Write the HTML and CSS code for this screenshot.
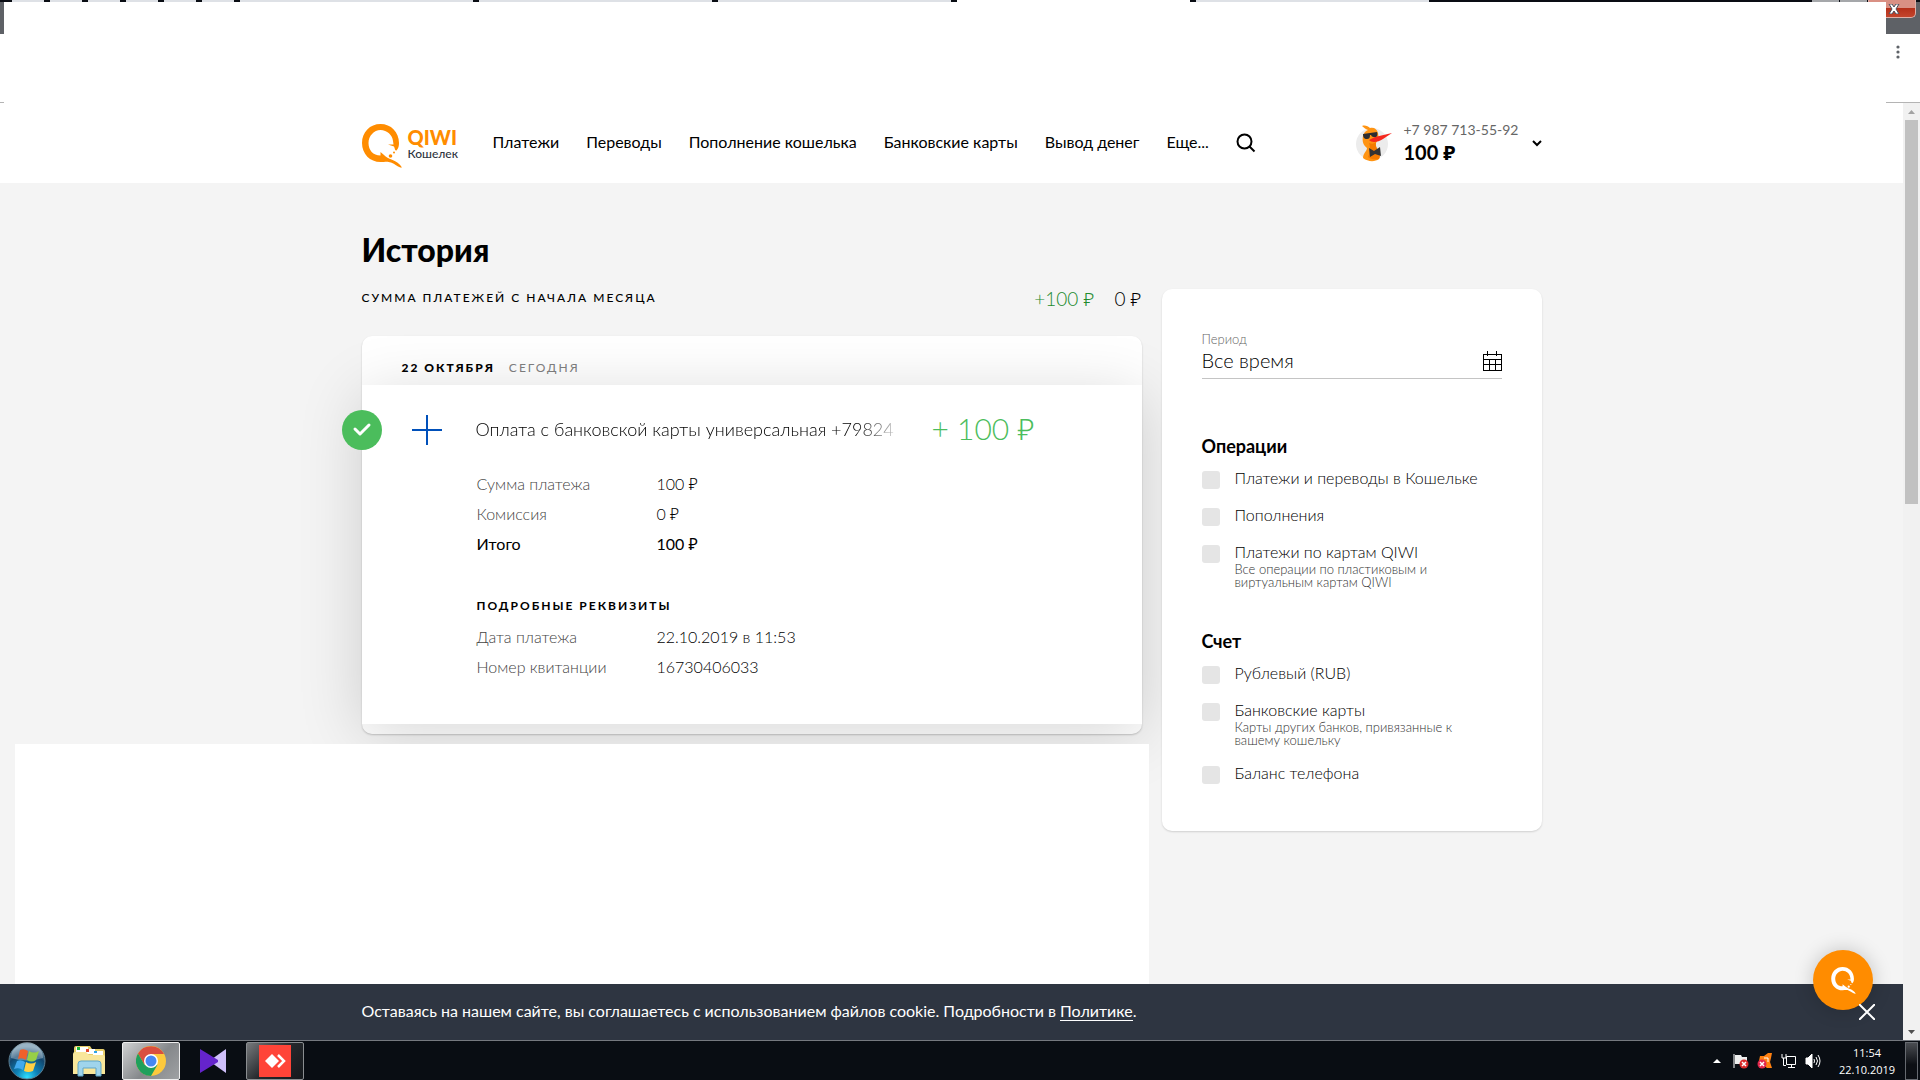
FILE: index.html
```html
<!DOCTYPE html>
<html lang="ru">
<head>
    <meta charset="UTF-8">
    <meta name="viewport" content="width=device-width, initial-scale=1.0">
    <title>История</title>
    <link rel="stylesheet" href="styles.css">
</head>
<body>

<svg class="defs" width="0" height="0" aria-hidden="true">
    <symbol id="bird" viewBox="0 0 40 44">
        <path fill="currentColor" fill-rule="evenodd" d="M18.500 0C8 0 0 8 0 19S8 38 18.500 38C23 38 25 37 29 38.500C34 40.500 37 44 40 43.500C38 40 34 37 29.500 35.500C27 34.500 24 33 22 31L18.500 28L18.500 31.500C11 31.500 6.500 26 6.500 19S12 6 18.500 6C25 6 30.500 11 31 17L31.500 20.500L26 20.500L32 22.500C33 25 33 27 34.500 26.500C36.500 24 37 22 37 19C37 8 29 0 18.500 0Z"/>
        <circle cx="28.500" cy="32" r="1.800" fill="currentColor"/>
        <circle cx="32" cy="28.500" r="1" fill="currentColor"/>
    </symbol>
</svg>

<div class="titlebar">
    <div class="tabs">
        <i class="tab tiny"></i><i class="tab tiny"></i><i class="tab tiny"></i><i class="tab tiny"></i><i class="tab tiny"></i><i class="tab tiny"></i>
        <i class="tab"></i><i class="tab"></i><i class="tab"></i><i class="tab active"></i><i class="tab"></i>
    </div>
    <i class="win-btn"></i>
    <i class="win-btn"></i>
    <button class="win-close" aria-label="Закрыть окно">
        <svg width="12" height="10" viewBox="0 0 12 10"><path d="M1 0h3l2 3 2-3h3L8 5l3 5H8L6 7l-2 3H1l3-5z" fill="#fff" stroke="#4a4f5c"/></svg>
    </button>
</div>
<div class="toolbar">
    <button class="menu-btn" aria-label="Меню">
        <svg width="4" height="14" viewBox="0 0 4 14"><circle cx="2" cy="2" r="1.600"/><circle cx="2" cy="7" r="1.600"/><circle cx="2" cy="12" r="1.600"/></svg>
    </button>
</div>
<div class="cover-top"></div>

<div class="viewport">
    <div class="page">
        <header class="header">
            <div class="container header-inner">
                <a href="#" class="logo" aria-label="QIWI Кошелек">
                    <svg class="logo-bird" width="40" height="44"><use href="#bird"/></svg>
                    <span class="logo-text"><b>QIWI</b><span>Кошелек</span></span>
                </a>
                <nav class="nav">
                    <a href="#">Платежи</a>
                    <a href="#">Переводы</a>
                    <a href="#">Пополнение кошелька</a>
                    <a href="#">Банковские карты</a>
                    <a href="#">Вывод денег</a>
                    <a href="#">Еще...</a>
                    <button class="search" aria-label="Поиск">
                        <svg width="20" height="20" viewBox="0 0 20 20" fill="none" stroke="#000" stroke-width="2"><circle cx="8.500" cy="8.500" r="7"/><path d="M13.500 13.500l5 5"/></svg>
                    </button>
                </nav>
                <button class="user">
                    <svg width="38" height="38" viewBox="0 0 38 38">
                        <circle cx="17" cy="20" r="16" fill="#ececec"/>
                        <path d="M7 2c3-1 6 0 8 2 4-1 7 1 8 5 1 4 0 7-2 10-1 4 1 6 3 9 1 3 1 5 0 7-4 3-11 3-16-1 0-5 4-7 4-10-4-3-5-7-4-12 1-3 2-5 5-6-2-1-4-2-6-4z" fill="#ff9412"/>
                        <path d="M14 19c3 1 5 1 7-1-1 5 2 7 3 10 1 3 1 5 0 7-4 1-9 0-11-2 2-4 3-8 1-14z" fill="#f47b00"/>
                        <path d="M20 13l17-4c-6 4-12 9-18 9-2 0-4-1-5-2z" fill="#f5281e"/>
                        <path d="M8 10l14-2c1 3 0 5-2 5-2 0-3 0-4-2h-1c0 3-1 4-3 4-3 0-4-2-4-5z" fill="#2c2c30"/>
                        <path d="M14 24l5 3 6-4 1 9-6-2-5 3z" fill="#333"/>
                    </svg>
                    <span class="user-text">
                        <span class="phone">+7 987 713-55-92</span>
                        <b>100 ₽</b>
                    </span>
                    <svg class="chevron" width="10" height="7" viewBox="0 0 10 7"><path d="M1 1l4 4 4-4" fill="none" stroke="#000" stroke-width="2"/></svg>
                </button>
            </div>
        </header>

        <main class="container">
            <h1>История</h1>
            <div class="columns">
                <section class="history">
                    <div class="summary">
                        <h2 class="caps">Сумма платежей с начала месяца</h2>
                        <div class="totals"><span class="income">+100 ₽</span><span>0 ₽</span></div>
                    </div>
                    <div class="day">
                        <div class="day-head caps"><b>22 октября</b><span>сегодня</span></div>
                        <article class="payment">
                            <span class="status">
                                <svg width="20" height="16" viewBox="0 0 20 16"><path d="M3 7l5 5L17 3" fill="none" stroke="#fff" stroke-width="3" stroke-linejoin="round" stroke-linecap="round"/></svg>
                            </span>
                            <div class="payment-head">
                                <svg width="30" height="30" viewBox="0 0 30 30"><path d="M15 0v30M0 15h30" stroke="#0050ba" stroke-width="2"/></svg>
                                <h3>Оплата с банковской карты универсальная +79824</h3>
                                <span class="amount">+ 100 ₽</span>
                            </div>
                            <table class="details">
                                <tr><th>Сумма платежа</th><td>100 ₽</td></tr>
                                <tr><th>Комиссия</th><td>0 ₽</td></tr>
                                <tr class="total"><th>Итого</th><td>100 ₽</td></tr>
                            </table>
                            <h4 class="caps">Подробные реквизиты</h4>
                            <table class="details">
                                <tr><th>Дата платежа</th><td>22.10.2019 в 11:53</td></tr>
                                <tr><th>Номер квитанции</th><td>16730406033</td></tr>
                            </table>
                        </article>
                    </div>
                </section>

                <aside class="filters">
                    <label class="field-label" for="period">Период</label>
                    <div class="field">
                        <input type="text" id="period" value="Все время" readonly>
                        <svg width="20" height="20" viewBox="0 0 20 20" fill="none" stroke="#000"><path d="M1 3h18v16H1zM1 8.500h18M1 13.500h18M7 8v11M13 8v11M5.500 0v5M14.500 0v5" shape-rendering="crispEdges"/></svg>
                    </div>
                    <fieldset>
                        <legend>Операции</legend>
                        <label class="check"><input type="checkbox"><span>Платежи и переводы в Кошельке</span></label>
                        <label class="check"><input type="checkbox"><span>Пополнения</span></label>
                        <label class="check"><input type="checkbox"><span>Платежи по картам QIWI<small>Все операции по пластиковым и виртуальным картам QIWI</small></span></label>
                    </fieldset>
                    <fieldset>
                        <legend>Счет</legend>
                        <label class="check"><input type="checkbox"><span>Рублевый (RUB)</span></label>
                        <label class="check"><input type="checkbox"><span>Банковские карты<small>Карты других банков, привязанные к вашему кошельку</small></span></label>
                        <label class="check"><input type="checkbox"><span>Баланс телефона</span></label>
                    </fieldset>
                </aside>
            </div>
        </main>

        <div class="cover-bottom"></div>

        <div class="cookie">
            <div class="container">Оставаясь на нашем сайте, вы соглашаетесь с использованием файлов cookie. Подробности в <a href="#">Политике</a>.</div>
            <button class="cookie-close" aria-label="Закрыть">
                <svg width="16" height="16" viewBox="0 0 16 16"><path d="M0 0l16 16M16 0L0 16" stroke="#fff" stroke-width="2"/></svg>
            </button>
        </div>
        <button class="chat" aria-label="Чат">
            <svg width="25" height="27"><use href="#bird"/></svg>
        </button>
    </div>
    <div class="scrollbar">
        <svg width="17" height="17"><path d="M5 11h7L8.500 7z" fill="#a3a3a3"/></svg>
        <div class="thumb"></div>
        <svg width="17" height="17"><path d="M5 7h7l-3.500 4z" fill="#505050"/></svg>
    </div>
</div>

<footer class="taskbar">
    <button class="task start" aria-label="Пуск">
        <svg width="38" height="38" viewBox="0 0 38 38">
            <defs>
                <radialGradient id="orb" cx="50%" cy="95%" r="85%">
                    <stop offset="0" stop-color="#2fe0ff"/><stop offset=".35" stop-color="#0e83b8"/><stop offset=".75" stop-color="#12466e"/><stop offset="1" stop-color="#6e93ab"/>
                </radialGradient>
            </defs>
            <circle cx="19" cy="19" r="18" fill="url(#orb)" stroke="#5b7e92"/>
            <path d="M3 16a16 16 0 0 1 32 0q-16 5-32 0z" fill="#fff" opacity=".3"/>
            <path d="M12 8q4-2 8 1l-2 9q-4-3-8-1z" fill="#f0602a"/>
            <path d="M21 9q5 3 10 0l-3 9q-4 3-9 0z" fill="#97cf47"/>
            <path d="M9 19q4-2 8 1l-2 8q-4-3-9-1z" fill="#41a9ee"/>
            <path d="M18 20q5 3 10 0l-3 9q-5 2-9 0z" fill="#ffd044"/>
        </svg>
    </button>
    <button class="task" aria-label="Проводник">
        <svg width="34" height="32" viewBox="0 0 34 32">
            <path d="M2 3q0-2 2-2h14l2 3h11q2 0 2 3v21H2z" fill="#e8cf6b"/>
            <path d="M4 2h12v5H4zM13 4h10v5H13zM21 6h10v4H21z" fill="#fff"/>
            <path d="M5 2h3v3H5z" fill="#18b93a"/><path d="M14 4h3v3h-3z" fill="#e24a2c"/><path d="M22 6h3v2h-3z" fill="#2ea3e8"/>
            <path d="M1 9q0-2 2-2h11l3 3h14q2 0 2 2v17H1z" fill="#f8e69a"/>
            <path d="M6 31V19q0-3 3-3h17q3 0 3 3v12h-5v-8H11v8z" fill="#9fd4ec" stroke="#5fa5c8"/>
        </svg>
    </button>
    <button class="task open current" aria-label="Chrome">
        <svg width="30" height="30" viewBox="0 0 30 30">
            <circle cx="15" cy="15" r="15" fill="#fdc93c"/>
            <path d="M2 7.500A15 15 0 0 1 28 8H15L8.500 18.800z" fill="#d94f3f"/>
            <path d="M2 7.500A15 15 0 0 0 15 30l6.500-11.200H8.500z" fill="#1fa05c"/>
            <circle cx="15" cy="15" r="7" fill="#fff"/><circle cx="15" cy="15" r="5.500" fill="#4688f1"/>
        </svg>
    </button>
    <button class="task" aria-label="Плеер">
        <svg width="28" height="24" viewBox="0 0 28 24"><path d="M27 0v24L13 14v-4z" fill="#cfbffa"/><path d="M1 0l18 11v2L1 24z" fill="#6524cc"/></svg>
    </button>
    <button class="task open" aria-label="AnyDesk">
        <svg width="32" height="32" viewBox="0 0 32 32"><path d="M0 0h32v32H0z" fill="#ff4438"/><path d="M13 9l7 7-7 7-7-7z" fill="#fff"/><path d="M19 10l6 6-6 6" fill="none" stroke="#fff" stroke-width="2.500"/></svg>
    </button>
    <div class="tray">
        <svg class="tray-arrow" width="8" height="5"><path d="M0 5l4-4 4 4z" fill="#fff"/></svg>
        <svg width="16" height="16" viewBox="0 0 16 16"><path d="M1 1v14" stroke="#fff"/><path d="M2 2h6l1 2h5v7H2z" fill="#eee"/><circle cx="11" cy="11" r="4.500" fill="#d92a2a"/><path d="M9 9l4 4m0-4l-4 4" stroke="#fff" stroke-width="1.500"/></svg>
        <svg width="16" height="16" viewBox="0 0 16 16"><path d="M3 3h4l4-3h4l-1 5-1 4 2 6h-5L6 12 2 8z" fill="#ff8010"/><path d="M7 5h4v4" fill="none" stroke="#fff"/><circle cx="5" cy="11" r="4.500" fill="#e3264c"/><path d="M3 9l4 4m0-4l-4 4" stroke="#fff" stroke-width="1.500"/></svg>
        <svg width="16" height="16" viewBox="0 0 16 16" fill="none" stroke="#fff"><path d="M5.500 3.500h9v8h-9zM7 14.500h7M10.500 12v2M2.500 5v7.500H5M1 1v4h4V1"/></svg>
        <svg width="16" height="16" viewBox="0 0 16 16" fill="none" stroke="#fff"><path d="M1 5h2l4-4v14l-4-4H1z" fill="#fff"/><path d="M9 6q1 2 0 4M11 4q3 4 0 8M13 2q4 6 0 12"/></svg>
        <div class="clock"><span>11:54</span><span>22.10.2019</span></div>
    </div>
    <button class="desktop" aria-label="Свернуть все окна"></button>
</footer>

</body>
</html>
```
FILE: styles.css
```css
* {
    box-sizing: border-box;
}

body {
    margin: 0;
    height: 100vh;
    display: flex;
    flex-direction: column;
    overflow: hidden;
    position: relative;
    background: #fff;
    color: #000;
    font-family: Lato, "Noto Sans", sans-serif;
    font-size: 16px;
    line-height: 20px;
}

button {
    border: none;
    background: none;
    padding: 0;
    margin: 0;
    font: inherit;
    color: inherit;
    cursor: pointer;
}

a {
    color: inherit;
    text-decoration: none;
}

svg {
    display: block;
    flex-shrink: 0;
}

.defs {
    position: absolute;
}

h1, h2, h3, h4 {
    margin: 0;
}

/* browser window */
.titlebar {
    height: 34px;
    flex-shrink: 0;
    display: flex;
    align-items: flex-start;
    padding-right: 4px;
    background: linear-gradient(#0a0d14 2px, #5e6166 2px);
}

.tabs {
    flex: 1;
    display: flex;
    gap: 6px;
    padding-left: 12px;
}

.tab {
    width: 233px;
    height: 2px;
    background: #dee1e6;
}

.tab.tiny {
    width: 32px;
}

.tab.active {
    background: #fff;
}

.win-btn {
    width: 27px;
    height: 18px;
    margin-right: 1px;
    background: #a5a7aa;
}

.win-close {
    width: 48px;
    height: 18px;
    padding-left: 19px;
    border: 1px solid #e0b0a8;
    border-top: none;
    border-radius: 0 0 5px 0;
    background: linear-gradient(#d99084 45%, #b5301a 50%, #c4452c);
}

.toolbar {
    height: 69px;
    flex-shrink: 0;
    display: flex;
    justify-content: flex-end;
    align-items: flex-start;
    padding: 11px 20px;
    border-bottom: 1px solid #b4b4b4;
}

.menu-btn {
    fill: #5f6368;
}

.cover-top {
    position: absolute;
    z-index: 1;
    top: 2px;
    left: 4px;
    right: 34px;
    height: 102px;
    background: #fff;
}

.viewport {
    flex: 1;
    min-height: 0;
    display: flex;
}

.page {
    flex: 1;
    position: relative;
    overflow: hidden;
    background: #f4f4f4;
}

.container {
    max-width: 1180px;
    margin: 0 auto;
}

/* header */
.header {
    background: #fff;
}

.header-inner {
    height: 80px;
    display: flex;
    align-items: center;
}

.logo {
    display: flex;
    align-items: flex-start;
    gap: 6px;
    width: 131px;
    padding-top: 5px;
}

.logo-bird {
    color: #ff8c00;
}

.logo-text {
    display: flex;
    flex-direction: column;
    padding-top: 3px;
    font-size: 12px;
    line-height: 14px;
    font-weight: 500;
    color: #2e3440;
}

.logo-text b {
    font-size: 20px;
    line-height: 20px;
    font-weight: 900;
    color: #ff8c00;
}

.nav {
    flex: 1;
    display: flex;
    align-items: center;
    gap: 27px;
    padding-bottom: 2px;
}

.search {
    padding-top: 2px;
}

.user {
    display: flex;
    align-items: center;
    gap: 10px;
    text-align: left;
}

.user-text {
    display: flex;
    flex-direction: column;
    padding: 0 3px 5px 0;
    line-height: 22px;
}

.user-text b {
    font-size: 20px;
}

.phone {
    font-size: 14px;
    color: #666;
}

/* history */
h1 {
    padding-top: 47px;
    font-size: 32px;
    line-height: 40px;
    font-weight: 900;
}

.columns {
    display: grid;
    grid-template-columns: 1fr 380px;
    gap: 20px;
    align-items: start;
    padding-top: 19px;
}

.caps {
    font-size: 12px;
    font-weight: bold;
    letter-spacing: 2px;
    text-transform: uppercase;
}

.summary {
    display: flex;
    justify-content: space-between;
    height: 47px;
}

.summary .caps {
    line-height: 18px;
    font-weight: 500;
}

.totals {
    display: flex;
    gap: 20px;
    font-size: 19px;
    font-weight: 300;
}

.income {
    color: #228b2e;
}

.day {
    padding-bottom: 10px;
    border-radius: 10px;
    background: #fff;
    box-shadow: 0 1px 2px rgba(0, 0, 0, 0.2);
}

.day-head {
    display: flex;
    gap: 14px;
    height: 49px;
    padding: 22px 40px 0;
}

.day-head span {
    font-weight: normal;
    color: #808080;
}

.payment {
    position: relative;
    padding: 25px 40px 42px;
    background: #fff;
    box-shadow: 0 10px 60px rgba(0, 0, 0, 0.16);
}

.status {
    position: absolute;
    left: -20px;
    top: 25px;
    width: 40px;
    height: 40px;
    border-radius: 50%;
    background: #4bbd5c;
    display: flex;
    align-items: center;
    justify-content: center;
}

.payment-head {
    display: grid;
    grid-template-columns: 30px 430px auto;
    align-items: center;
    height: 40px;
    padding-left: 10px;
    column-gap: 34px;
}

.payment-head h3 {
    overflow: hidden;
    white-space: nowrap;
    padding-bottom: 2px;
    font-size: 18px;
    line-height: 24px;
    font-weight: 300;
    -webkit-mask-image: linear-gradient(to left, transparent, #000 50px);
    mask-image: linear-gradient(to left, transparent, #000 50px);
}

.amount {
    margin-left: -8px;
    padding-bottom: 5px;
    font-size: 30px;
    font-weight: 300;
    color: #4bbd5c;
}

.details {
    margin: 19px 0 0 75px;
    border-collapse: collapse;
    font-weight: 300;
}

.details th,
.details td {
    height: 30px;
    padding: 0;
    text-align: left;
    font-weight: 300;
}

.details th {
    width: 180px;
    color: #444;
}

.details .total th,
.details .total td {
    font-weight: normal;
    color: #000;
}

.payment h4 {
    margin: 37px 0 0 75px;
}

.payment h4 + .details {
    margin-top: 6px;
}

/* filters */
.filters {
    position: relative;
    padding: 40px 40px 30px;
    border-radius: 10px;
    background: #fff;
    box-shadow: 0 1px 2px rgba(0, 0, 0, 0.15);
    font-weight: 300;
}

.field-label {
    display: block;
    font-size: 13px;
    color: #666;
}

.field {
    display: flex;
    align-items: flex-start;
    height: 30px;
    border-bottom: 1px solid #c4c4c4;
}

.field input {
    flex: 1;
    min-width: 0;
    height: 22px;
    padding: 0;
    border: none;
    outline: none;
    background: none;
    font: inherit;
    font-size: 20px;
}

.field svg {
    margin-top: 2px;
}

fieldset {
    margin: 55px 0 0;
    padding: 0;
    border: none;
}

fieldset + fieldset {
    margin-top: 23px;
}

legend {
    padding: 0 0 11px;
    font-size: 18px;
    line-height: 24px;
    font-weight: bold;
}

.check {
    display: flex;
    align-items: flex-start;
    gap: 15px;
    margin-bottom: 17px;
    line-height: 18px;
}

.check input {
    appearance: none;
    flex-shrink: 0;
    width: 18px;
    height: 18px;
    margin: 2px 0 0;
    border-radius: 3px;
    background: #e5e5e5;
}

.check small {
    display: block;
    max-width: 236px;
    margin-top: 2px;
    font-size: 13px;
    line-height: 13px;
    color: #333;
}

.cover-bottom {
    position: absolute;
    left: 15px;
    top: 641px;
    bottom: 0;
    width: 1134px;
    background: #fff;
}

.cookie {
    position: absolute;
    left: 0;
    right: 0;
    bottom: 0;
    height: 56px;
    padding-top: 17px;
    background: #2e3541;
    color: #fff;
}

.cookie a {
    border-bottom: 1px solid #fff;
}

.cookie-close {
    position: absolute;
    right: 28px;
    top: 20px;
    z-index: 1;
}

.chat {
    position: absolute;
    right: 30px;
    bottom: 30px;
    width: 60px;
    height: 60px;
    border-radius: 50%;
    background: #ff8c00;
    color: #fff;
    display: flex;
    align-items: center;
    justify-content: center;
    box-shadow: 0 0 20px rgba(0, 0, 0, 0.2);
}

.scrollbar {
    width: 17px;
    display: flex;
    flex-direction: column;
    justify-content: space-between;
    background: #f1f1f1;
}

.thumb {
    height: 41%;
    margin: 0 2px auto;
    background: #c1c1c1;
}

/* taskbar */
.taskbar {
    height: 40px;
    flex-shrink: 0;
    display: flex;
    align-items: center;
    padding: 0 2px 0 8px;
    border-top: 1px solid #75797f;
    background: #090d13;
    color: #fff;
}

.task {
    width: 58px;
    height: 38px;
    margin-right: 4px;
    display: flex;
    align-items: center;
    justify-content: center;
}

.start {
    width: 38px;
    margin-right: 14px;
}

.open {
    border: 1px solid #8a8d90;
    border-radius: 2px;
    background: linear-gradient(135deg, #77797c, #25282c 50%, #15181c);
}

.current {
    border-color: #eee;
    background: linear-gradient(135deg, #d0d1d2, #85888b 55%, #9fa1a3);
}

.tray {
    margin-left: auto;
    display: flex;
    align-items: center;
    gap: 8px;
}

.tray-arrow {
    margin-right: 4px;
}

.clock {
    display: flex;
    flex-direction: column;
    align-items: center;
    width: 76px;
    font-family: "Open Sans", sans-serif;
    font-size: 11px;
    line-height: 17px;
}

.desktop {
    width: 13px;
    height: 38px;
    border: 1px solid #666a70;
    background: linear-gradient(#4a4d52, #0c0f14 60%);
}
```
